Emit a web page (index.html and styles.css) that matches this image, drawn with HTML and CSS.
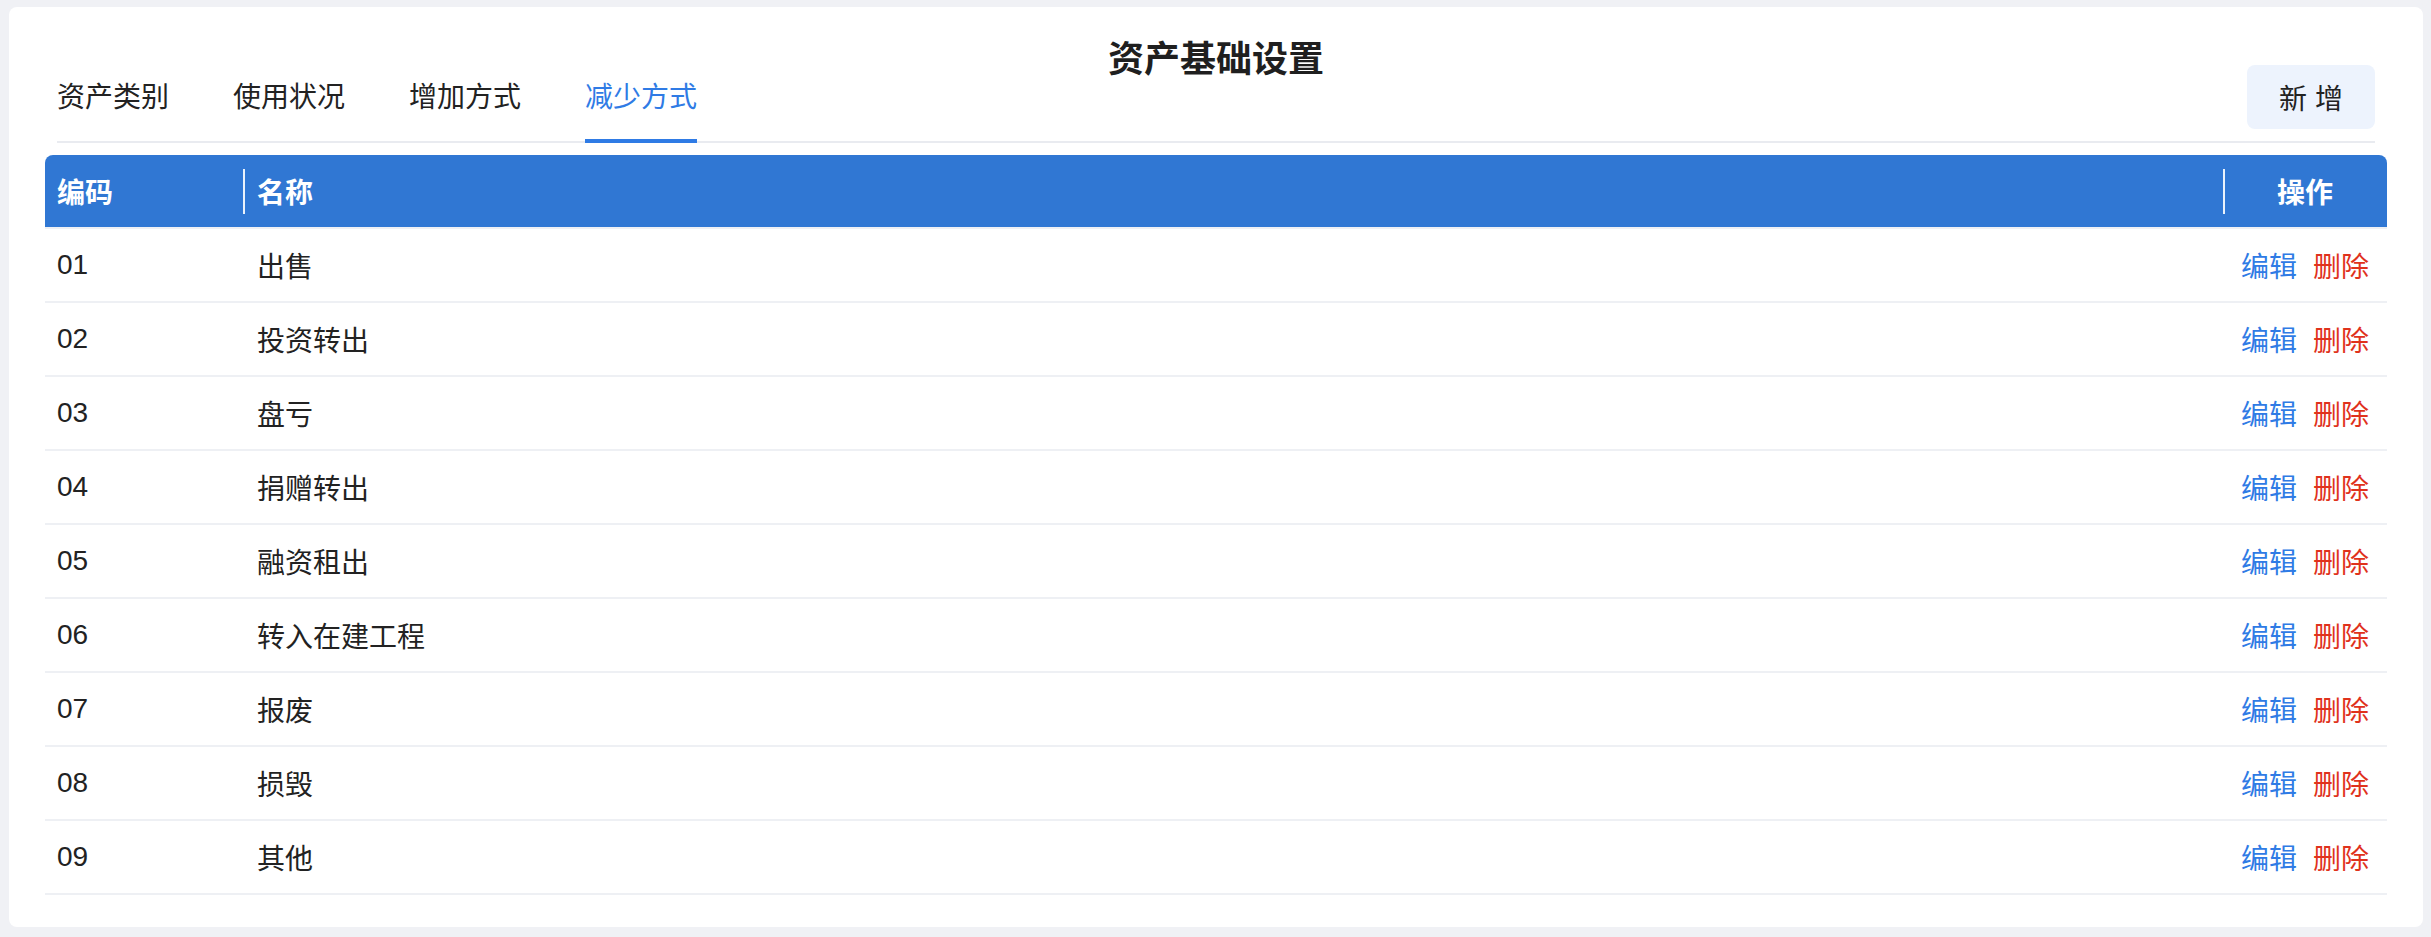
FILE: index.html
```html
<!DOCTYPE html>
<html lang="zh-CN">
<head>
    <meta charset="UTF-8">
    <meta name="viewport" content="width=device-width, initial-scale=1.0">
    <title>资产基础设置</title>
    <link rel="stylesheet" href="styles.css">
</head>
<body>
    <div class="card">
        <!-- Title, tabs and add button -->
        <div class="head">
            <nav class="tabs">
                <a class="tab" href="#">资产类别</a>
                <a class="tab" href="#">使用状况</a>
                <a class="tab" href="#">增加方式</a>
                <a class="tab active" href="#">减少方式</a>
            </nav>
            <h1 class="title">资产基础设置</h1>
            <button class="btn-add" type="button">新 增</button>
        </div>

        <!-- Reduction methods list -->
        <table class="grid">
            <thead>
                <tr>
                    <th class="col-code">编码</th>
                    <th class="col-name">名称</th>
                    <th class="col-ops">操作</th>
                </tr>
            </thead>
            <tbody>
                <tr><td>01</td><td class="name">出售</td><td class="ops"><a class="edit" href="#">编辑</a><a class="del" href="#">删除</a></td></tr>
                <tr><td>02</td><td class="name">投资转出</td><td class="ops"><a class="edit" href="#">编辑</a><a class="del" href="#">删除</a></td></tr>
                <tr><td>03</td><td class="name">盘亏</td><td class="ops"><a class="edit" href="#">编辑</a><a class="del" href="#">删除</a></td></tr>
                <tr><td>04</td><td class="name">捐赠转出</td><td class="ops"><a class="edit" href="#">编辑</a><a class="del" href="#">删除</a></td></tr>
                <tr><td>05</td><td class="name">融资租出</td><td class="ops"><a class="edit" href="#">编辑</a><a class="del" href="#">删除</a></td></tr>
                <tr><td>06</td><td class="name">转入在建工程</td><td class="ops"><a class="edit" href="#">编辑</a><a class="del" href="#">删除</a></td></tr>
                <tr><td>07</td><td class="name">报废</td><td class="ops"><a class="edit" href="#">编辑</a><a class="del" href="#">删除</a></td></tr>
                <tr><td>08</td><td class="name">损毁</td><td class="ops"><a class="edit" href="#">编辑</a><a class="del" href="#">删除</a></td></tr>
                <tr><td>09</td><td class="name">其他</td><td class="ops"><a class="edit" href="#">编辑</a><a class="del" href="#">删除</a></td></tr>
            </tbody>
        </table>
    </div>
</body>
</html>
```

FILE: styles.css
```css
body {
    margin: 0;
    padding: 7px 8px 10px 9px;
    background-color: #f0f1f5;
    font-family: "Liberation Sans", "Noto Sans CJK SC", sans-serif;
    color: #222;
}

.card {
    background-color: #fff;
    border-radius: 8px;
    padding: 29px 36px 32px 36px;
}

/* header: tabs left, title centre, button right */
.head {
    display: grid;
    grid-template-columns: 1fr auto 1fr;
    min-height: 105px;
    margin: 0 12px;
    border-bottom: 2px solid #e9ebf0;
}

.title {
    grid-column: 2;
    grid-row: 1;
    align-self: start;
    margin: 0;
    font-size: 36px;
    line-height: 48px;
    font-weight: bold;
    color: #1f1f1f;
}

.tabs {
    grid-column: 1;
    grid-row: 1;
    align-self: end;
    display: flex;
    gap: 64px;
}

.tab {
    position: relative;
    font-size: 28px;
    line-height: 40px;
    padding-bottom: 23px;
    color: #222;
    text-decoration: none;
}

.tab.active {
    color: #2f7be5;
}

.tab.active::after {
    content: "";
    position: absolute;
    left: 0;
    right: 0;
    bottom: -2px;
    height: 4px;
    background-color: #2f7be5;
}

.btn-add {
    grid-column: 3;
    grid-row: 1;
    align-self: end;
    justify-self: end;
    width: 128px;
    height: 64px;
    margin-bottom: 12px;
    border: none;
    border-radius: 8px;
    background-color: #edf3fd;
    font-family: inherit;
    font-size: 28px;
    color: #222;
    cursor: pointer;
}

/* table */
.grid {
    width: 100%;
    margin-top: 12px;
    border-collapse: collapse;
    font-size: 28px;
}

.grid th {
    position: relative;
    height: 72px;
    padding: 0 12px;
    background-color: #3077d3;
    color: #fff;
    font-weight: bold;
    text-align: left;
    border-bottom: 2px solid #eef0f4;
}

.grid th.col-code {
    width: 174px;
    border-top-left-radius: 8px;
}

.grid th.col-name {
    padding-left: 14px;
}

.grid th.col-ops {
    width: 140px;
    text-align: center;
    border-top-right-radius: 8px;
}

.grid th.col-name::before,
.grid th.col-ops::before {
    content: "";
    position: absolute;
    left: 0;
    top: 14px;
    bottom: 13px;
    width: 2px;
    background-color: rgba(255, 255, 255, 0.9);
}

.grid td {
    height: 72px;
    padding: 0 12px;
    border-bottom: 2px solid #eef0f4;
}

.grid td.name {
    padding-left: 14px;
}

.grid td.ops {
    text-align: center;
    white-space: nowrap;
}

.ops a {
    text-decoration: none;
}

.ops .edit {
    color: #2f7be5;
    margin-right: 16px;
}

.ops .del {
    color: #e0321c;
}
```
